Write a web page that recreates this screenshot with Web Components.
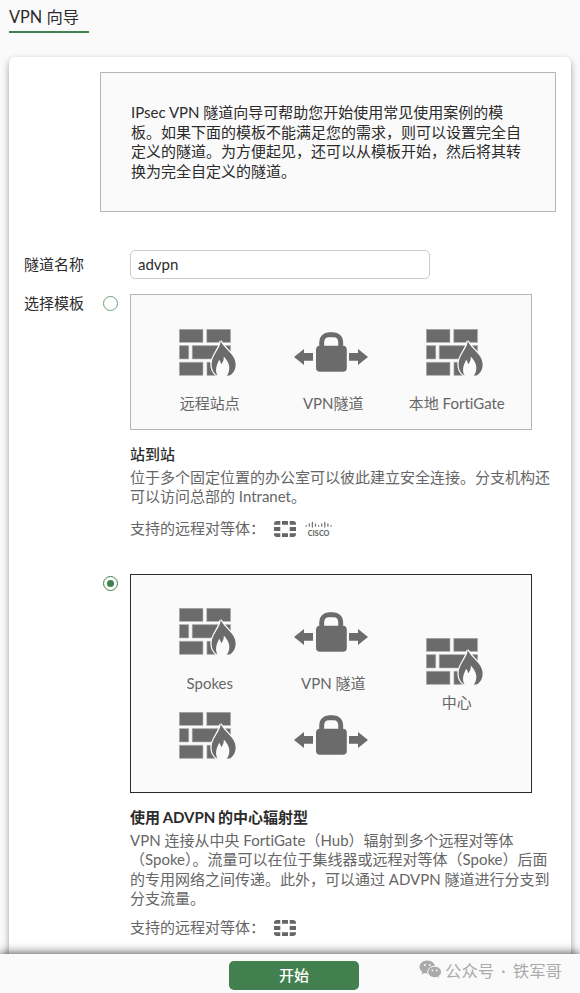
<!DOCTYPE html>
<html lang="zh-CN">
<head>
<meta charset="utf-8">
<title>VPN 向导</title>
<style>
  html, body {
    margin: 0;
    height: 100%;
  }
  body {
    background: #fafafa;
    color: #2b2b2b;
    font: 15px/19.5px Lato, "Noto Sans CJK SC", sans-serif;
    font-variant-ligatures: none;
    overflow: hidden;
  }
</style>
</head>
<body>
<vpn-wizard heading="VPN 向导">
  <wizard-intro>IPsec VPN 隧道向导可帮助您开始使用常见使用案例的模<br>板。如果下面的模板不能满足您的需求，则可以设置完全自<br>定义的隧道。为方便起见，还可以从模板开始，然后将其转<br>换为完全自定义的隧道。</wizard-intro>

  <form-row label="隧道名称" style="margin-top: 38px; --label-height: 29px">
    <text-field value="advpn"></text-field>
  </form-row>

  <form-row label="选择模板" style="margin-top: 15px">
    <template-option style="height: 280px">
      <topology-diagram slot="diagram" style="height: 134px; --top: 34px">
        <topology-node icon="firewall" label="远程站点"></topology-node>
        <topology-node icon="tunnel" label="VPN隧道"></topology-node>
        <topology-node icon="firewall" label="本地 FortiGate"></topology-node>
      </topology-diagram>
      <span slot="name">站到站</span>
      位于多个固定位置的办公室可以彼此建立安全连接。分支机构还<br>可以访问总部的 Intranet。
      <ui-icon slot="peers" name="fortinet"></ui-icon>
      <ui-icon slot="peers" name="cisco"></ui-icon>
    </template-option>
    <template-option checked style="--peers-gap: 9px">
      <topology-diagram slot="diagram" style="height: 217px; --top: 33px">
        <topology-node icon="firewall" label="Spokes" style="--gap: 18px"></topology-node>
        <topology-node icon="tunnel" label="VPN 隧道" style="--gap: 18px; --shift: 1px"></topology-node>
        <topology-node icon="firewall" label="中心" style="--gap: 7px; margin-top: 30px"></topology-node>
        <topology-node icon="firewall"></topology-node>
        <topology-node icon="tunnel"></topology-node>
      </topology-diagram>
      <span slot="name">使用 ADVPN 的中心辐射型</span>
      VPN 连接从中央 FortiGate（Hub）辐射到多个远程对等体<br>（Spoke）。流量可以在位于集线器或远程对等体（Spoke）后面<br>的专用网络之间传递。此外，可以通过 ADVPN 隧道进行分支到<br>分支流量。
      <ui-icon slot="peers" name="fortinet"></ui-icon>
    </template-option>
  </form-row>

  <primary-button slot="footer">开始</primary-button>
  <account-mark slot="footer">公众号 · 铁军哥</account-mark>
</vpn-wizard>

<script>
const icons = {
  firewall: `
    <svg width="62" height="48" viewBox="0 0 62 48">
      <g fill="#6b6b6b" stroke="#b8b8b8" stroke-width=".6">
        <path d="M.3.3H24V13.5H.3zM27.7.3H51.6V13.5H27.7zM.3 16.6H9.8V30H.3zM13.2 16.6H51.6V30H13.2zM.3 33.2H24V46.4H.3zM27.9 33.2H45V46.4H27.9z"/>
      </g>
      <path fill="#6b6b6b" stroke="#fafafa" stroke-width="2.6" paint-order="stroke" d="M41.6 12C42 19 32.6 26 32.6 35.5C32.6 40.5 34.5 44 38.3 46.5H50.5C54.5 44.3 56.8 40.3 56.6 34.7C56.2 25 45.5 20.5 41.6 12Z"/>
      <path fill="#fafafa" d="M38.7 47C35.7 42 37.2 36.5 40.2 30.8C41.2 32 41.8 33.5 42.2 35.2C44.2 33 44.9 30.5 44.8 27.5C47.8 30.5 50 34.3 50.3 38C50.5 41.8 49.5 44.7 47.4 47Z"/>
    </svg>`,
  tunnel: `
    <svg width="78" height="48" viewBox="0 0 78 48">
      <path fill="#6b6b6b" d="M0 28L10 19.9V24.1H19V31.8H10V36.1zM74 28L64 19.9V24.1H55V31.8H64V36.1z"/>
      <path fill="none" stroke="#6b6b6b" stroke-width="4.9" d="M27.7 19V13.5C27.7 8.4 31.2 5.8 35 5.8H39.4C43.2 5.8 46.7 8.4 46.7 13.5V19"/>
      <rect fill="#6b6b6b" x="22" y="16.8" width="30.8" height="26" rx="4"/>
    </svg>`,
  fortinet: `
    <svg width="22" height="16" viewBox="0 0 22 16">
      <path fill="#666" d="M3 0H6.3V3.8H0V3Q0 0 3 0zM8 0H14V3.8H8zM15.7 0H19Q22 0 22 3V3.8H15.7zM0 6.1H6.3V9.9H0zM15.7 6.1H22V9.9H15.7zM0 12.2H6.3V16H3Q0 16 0 13zM8 12.2H14V16H8zM15.7 12.2H22V13Q22 16 19 16H15.7z"/>
    </svg>`,
  cisco: `
    <svg width="28" height="16" viewBox="0 0 28 16">
      <path fill="none" stroke="#777" stroke-width="1.3" stroke-linecap="round" d="M1.2 4.6V5.2M4.3 3V5.2M7.4 1.4V6M10.5 3V5.2M13.6 4.6V5.2M16.7 3V5.2M19.8 1.4V6M22.9 3V5.2M26 4.6V5.2"/>
      <text x="2.8" y="14.6" fill="#666" font-family="Lato" font-weight="900" font-size="7.2" textLength="21.6">CISCO</text>
    </svg>`,
  wechat: `
    <svg width="23" height="19" viewBox="0 0 23 19">
      <path fill="#aaa" d="M8.2.5C3.8.5.5 3.4.5 7C.5 9 1.6 10.8 3.3 12L2.6 14.6L5.5 13.1Q6.8 13.5 8.3 13.5C12.7 13.5 16 10.6 16 7S12.7.5 8.2.5z"/>
      <path fill="#aaa" stroke="#fafafa" stroke-width="1" d="M15.6 6.3C11.8 6.3 8.8 8.8 8.8 12C8.8 15.2 11.8 17.6 15.6 17.6Q16.9 17.6 18 17.2L20.6 18.4L20 16.2C21.6 15.2 22.5 13.7 22.5 12C22.5 8.8 19.4 6.3 15.6 6.3z"/>
      <g fill="#fafafa"><circle cx="5.8" cy="5" r="1"/><circle cx="10.8" cy="5" r="1"/><circle cx="13.4" cy="10.4" r=".9"/><circle cx="17.8" cy="10.4" r=".9"/></g>
    </svg>`
};

class UiIcon extends HTMLElement {
  constructor() {
    super();
    this.attachShadow({ mode: 'open' });
  }

  static get observedAttributes() {
    return ['name'];
  }

  attributeChangedCallback(attr, oldValue, newValue) {
    this.shadowRoot.innerHTML = `
      <style>
        :host { display: inline-flex; }
        svg { display: block; }
      </style>
      ${icons[newValue] || ''}`;
  }
}

class VpnWizard extends HTMLElement {
  connectedCallback() {
    this.attachShadow({ mode: 'open' }).innerHTML = `
      <style>
        :host {
          display: flex;
          flex-direction: column;
          height: 100vh;
        }
        header {
          flex: none;
          height: 57px;
          padding-left: 9px;
        }
        h1 {
          box-sizing: border-box;
          width: 80px;
          height: 33px;
          margin: 0;
          border-bottom: 2px solid #43804f;
          font-size: 16.3px;
          font-weight: 400;
          line-height: 34px;
          white-space: nowrap;
        }
        main {
          flex: 1;
          min-height: 0;
          padding: 0 9px;
        }
        .card {
          box-sizing: border-box;
          height: 940px;
          padding: 15px 15px 0;
          border-radius: 6px;
          background: #fff;
          box-shadow: 0 3px 7px rgba(0, 0, 0, .36);
        }
        footer {
          position: relative;
          flex: none;
          display: flex;
          justify-content: center;
          box-sizing: border-box;
          height: 39px;
          padding: 7px 0 3px 8px;
          background: #fafafa;
          box-shadow: 0 0 10px rgba(0, 0, 0, .8);
        }
      </style>
      <header><h1>${this.getAttribute('heading')}</h1></header>
      <main><div class="card"><slot></slot></div></main>
      <footer><slot name="footer"></slot></footer>`;
  }
}

class WizardIntro extends HTMLElement {
  connectedCallback() {
    this.attachShadow({ mode: 'open' }).innerHTML = `
      <style>
        :host {
          display: block;
          margin-left: 76px;
          padding: 30px;
          border: 1px solid #b5b5b5;
          background: #fafafa;
          white-space: nowrap;
        }
      </style>
      <slot></slot>`;
  }
}

class FormRow extends HTMLElement {
  connectedCallback() {
    this.attachShadow({ mode: 'open' }).innerHTML = `
      <style>
        :host {
          display: grid;
          grid-template-columns: 106px 1fr;
        }
        label {
          line-height: var(--label-height, 19.5px);
        }
      </style>
      <label>${this.getAttribute('label')}</label>
      <div><slot></slot></div>`;
  }
}

class TextField extends HTMLElement {
  connectedCallback() {
    this.attachShadow({ mode: 'open' }).innerHTML = `
      <style>
        :host { display: block; }
        input {
          display: block;
          box-sizing: border-box;
          width: 300px;
          height: 29px;
          padding: 0 7px 1px;
          border: 1px solid #ccc;
          border-radius: 5px;
          background: #fff;
          color: inherit;
          font: inherit;
        }
      </style>
      <input type="text" value="${this.getAttribute('value')}">`;
  }
}

class TemplateOption extends HTMLElement {
  connectedCallback() {
    this.attachShadow({ mode: 'open' }).innerHTML = `
      <style>
        :host {
          display: grid;
          grid-template-columns: 15px 1fr;
          column-gap: 12px;
          align-items: start;
          margin-left: -27px;
          --frame: #b5b5b5;
        }
        :host([checked]) { --frame: #2b2b2b; }
        .radio {
          display: grid;
          place-items: center;
          box-sizing: border-box;
          width: 15px;
          height: 15px;
          margin-top: 2px;
          border: 1px solid #6f9f79;
          border-radius: 50%;
          background: #fff;
        }
        :host([checked]) .radio { border-color: #43804f; }
        :host([checked]) .radio::after {
          content: "";
          width: 7px;
          height: 7px;
          border-radius: 50%;
          background: #43804f;
        }
        .name {
          margin-top: 15px;
          font-weight: 500;
        }
        :host([checked]) .name {
          font-weight: 700;
          word-spacing: -1px;
        }
        .text {
          margin-top: 3px;
          color: #666;
          white-space: nowrap;
        }
        .peers {
          display: flex;
          align-items: center;
          gap: 9px;
          margin-top: var(--peers-gap, 12px);
          color: #666;
        }
        .peers span { width: 135px; }
        ::slotted(ui-icon) { margin-top: 2px; }
      </style>
      <div class="radio"></div>
      <div>
        <slot name="diagram"></slot>
        <div class="name"><slot name="name"></slot></div>
        <div class="text"><slot></slot></div>
        <div class="peers"><span>支持的远程对等体：</span><slot name="peers"></slot></div>
      </div>`;
  }
}

class TopologyDiagram extends HTMLElement {
  connectedCallback() {
    this.attachShadow({ mode: 'open' }).innerHTML = `
      <style>
        :host {
          display: block;
          width: 400px;
          border: 1px solid var(--frame);
          background: #fafafa;
        }
        .grid {
          display: grid;
          grid-template-columns: repeat(3, 123.5px);
          grid-auto-rows: 104px;
          padding: var(--top) 0 0 17px;
        }
      </style>
      <div class="grid"><slot></slot></div>`;
  }
}

class TopologyNode extends HTMLElement {
  connectedCallback() {
    this.attachShadow({ mode: 'open' }).innerHTML = `
      <style>
        :host {
          display: flex;
          flex-direction: column;
          align-items: center;
          gap: var(--gap, 17px);
          color: #666;
          white-space: nowrap;
        }
        ui-icon {
          height: 48px;
        }
        ui-icon[name=tunnel] {
          margin: var(--shift, 0) 0 calc(-1 * var(--shift, 0px));
        }
      </style>
      <ui-icon name="${this.getAttribute('icon')}"></ui-icon>
      <span>${this.getAttribute('label') || ''}</span>`;
  }
}

class PrimaryButton extends HTMLElement {
  connectedCallback() {
    this.attachShadow({ mode: 'open' }).innerHTML = `
      <style>
        :host { display: block; }
        button {
          display: block;
          width: 130px;
          height: 29px;
          padding: 0;
          border: 0;
          border-radius: 5px;
          background: #43804f;
          color: #fff;
          font: inherit;
          font-weight: 500;
        }
      </style>
      <button><slot></slot></button>`;
  }
}

class AccountMark extends HTMLElement {
  connectedCallback() {
    this.attachShadow({ mode: 'open' }).innerHTML = `
      <style>
        :host {
          position: absolute;
          top: 6px;
          left: 419px;
          display: flex;
          gap: 3px;
          color: #aaa;
          font: 16.4px/21px Lato, "Noto Sans CJK SC", sans-serif;
          word-spacing: 3px;
          white-space: nowrap;
        }
      </style>
      <ui-icon name="wechat"></ui-icon>
      <span><slot></slot></span>`;
  }
}

customElements.define('ui-icon', UiIcon);
customElements.define('vpn-wizard', VpnWizard);
customElements.define('wizard-intro', WizardIntro);
customElements.define('form-row', FormRow);
customElements.define('text-field', TextField);
customElements.define('template-option', TemplateOption);
customElements.define('topology-diagram', TopologyDiagram);
customElements.define('topology-node', TopologyNode);
customElements.define('primary-button', PrimaryButton);
customElements.define('account-mark', AccountMark);
</script>
</body>
</html>
